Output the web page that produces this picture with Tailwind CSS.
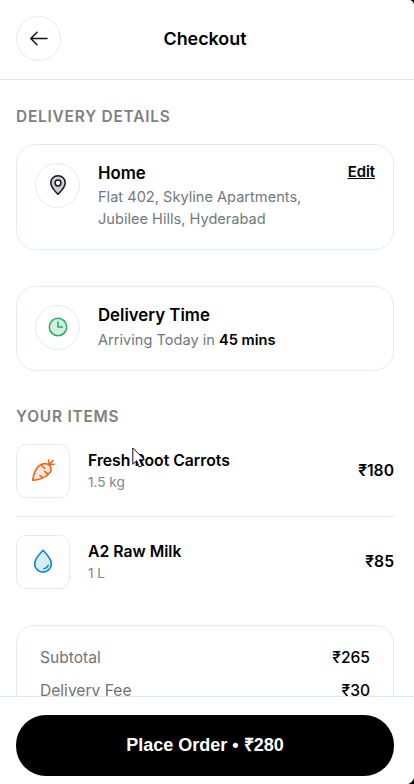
<!DOCTYPE html>
<html lang="en">
<head>
<meta charset="utf-8">
<meta name="viewport" content="width=device-width, initial-scale=1">
<title>Checkout</title>
<script src="https://cdn.jsdelivr.net/npm/@tailwindcss/browser@4"></script>
</head>
<body class="bg-black">
<div class="relative flex h-[784px] w-[414px] flex-col overflow-hidden rounded-tr-[5px] rounded-br-[8px] bg-white font-['Inter',sans-serif] text-black">
  <header class="grid h-20 shrink-0 grid-cols-[45px_1fr_45px] items-center border-b border-[#e2eeec] pr-5 pl-4 pb-[2px]">
    <button class="flex size-[45px] items-center justify-center rounded-full border border-[#e2eeec]" aria-label="Back">
      <svg class="size-6" viewBox="0 0 24 24" fill="none" stroke="#111" stroke-width="1.5" stroke-linecap="round" stroke-linejoin="round"><path d="M20 11.500H4M10 5.200 3.800 11.500 10 17.800"/></svg>
    </button>
    <h1 class="text-center text-[17.9px] leading-6 font-semibold">Checkout</h1>
  </header>

  <main class="min-h-0 flex-1 overflow-hidden pr-5 pl-4 pt-[26px]">
    <h2 class="h-[38px] text-[15.4px] leading-[22px] font-semibold tracking-[0.8px] text-[#7f7e84]">DELIVERY DETAILS</h2>
    <section class="flex h-[106px] rounded-[20px] border border-[#e2eeec] px-[18px] pt-[18px]">
      <div class="flex size-[45px] shrink-0 items-center justify-center rounded-full border border-[#e2eeec]">
        <svg class="mb-[2px] size-[22px]" viewBox="0 0 22 22"><path d="M11 1.700c-4.200 0-7.200 3-7.200 7C3.800 13.500 8 17 11 20.300c3-3.300 7.200-6.800 7.200-11.600 0-4-3-7-7.200-7Z" fill="#cfccd6" stroke="#17151c" stroke-width="1.500" stroke-linejoin="round"/><circle cx="11" cy="9" r="2.900" fill="#fff" stroke="#17151c" stroke-width="1.500"/></svg>
      </div>
      <div class="-mt-px ml-[18px] flex-1">
        <h3 class="text-[16.8px] leading-[22px] font-semibold">Home</h3>
        <p class="mt-[2px] text-[14.6px] leading-[22px] text-[#727880]">Flat 402, Skyline Apartments,<br>Jubilee Hills, Hyderabad</p>
      </div>
      <a class="h-5 text-[14.8px] leading-[18px] font-semibold underline">Edit</a>
    </section>
    <section class="mt-9 flex h-[85px] rounded-[20px] border border-[#e2eeec] px-[18px] pt-[18px]">
      <div class="flex size-[45px] shrink-0 items-center justify-center rounded-full border border-[#e2eeec]">
        <svg class="mb-[2px] size-[22px]" viewBox="0 0 22 22" fill="none" stroke="#27ae60" stroke-width="1.500"><circle cx="11" cy="11" r="8.700" fill="#d3eee1"/><path d="M11 5.500V11h5"/></svg>
      </div>
      <div class="-mt-px ml-[18px]">
        <h3 class="text-[16.8px] leading-[22px] font-semibold">Delivery Time</h3>
        <p class="mt-[3px] text-[14.600px] leading-[22px] text-[#727880]">Arriving Today in <strong class="font-semibold text-black">45 mins</strong></p>
      </div>
    </section>

    <h2 class="mt-[35px] h-[38px] text-[15.4px] leading-[22px] font-semibold tracking-[0.8px] text-[#7f7e84]">YOUR ITEMS</h2>
    <div class="flex h-[73px] items-start border-b border-[#e2eeec]">
      <div class="flex size-[54px] shrink-0 items-center justify-center rounded-[10px] border border-[#e2eeec]">
        <svg class="size-[26px]" viewBox="0 0 26 26" fill="none" stroke="#f26416" stroke-width="1.600" stroke-linecap="round" stroke-linejoin="round"><path d="M2.700 22.300C3.200 18.500 5 12 8.500 8.300c3-3.100 8-3.500 10.700-1.300 2.700 2.500 2.600 6.200-.4 9-4 3.700-10.500 6-16.100 6.300Z" fill="#f8e5dc"/><path d="M11.500 7.500l3.200 3M17.800 16.200l-3-2.800M10 17.500l2.300 2.200M19.200 6.800 18.500 2M19.200 6.800 23 2.500M19.200 6.800l5-.6"/></svg>
      </div>
      <div class="ml-[18px] flex-1 pt-[6px]">
        <h3 class="text-[15.75px] leading-[22px] font-semibold">Fresh Root Carrots</h3>
        <p class="text-[13.600px] leading-[21px] text-[#85848b]">1.5 kg</p>
      </div>
      <span class="pt-4 text-[15.7px] leading-[22px] font-semibold">₹180</span>
    </div>
    <div class="mt-[18px] flex h-[54px] items-start">
      <div class="flex size-[54px] shrink-0 items-center justify-center rounded-[10px] border border-[#e2eeec]">
        <svg class="mb-[2px] size-[26px]" viewBox="0 0 26 26" fill="none" stroke="#1288c9" stroke-width="1.700" stroke-linecap="round" stroke-linejoin="round"><path d="M13 2.300C9.500 6 4.600 10.800 4.600 15.800a8.400 8.300 0 0 0 16.800 0C21.400 10.800 16.500 6 13 2.300Z" fill="#d5eef5"/><path d="M18.200 17.500c-.8 1.800-2 2.700-4.200 3.300"/></svg>
      </div>
      <div class="ml-[18px] flex-1 pt-[6px]">
        <h3 class="text-[15.75px] leading-[22px] font-semibold">A2 Raw Milk</h3>
        <p class="text-[13.600px] leading-[21px] text-[#85848b]">1 L</p>
      </div>
      <span class="pt-4 text-[15.7px] leading-[22px] font-semibold">₹85</span>
    </div>

    <section class="mt-9 h-40 rounded-[18px] border border-[#e2eeec] px-[23px] pt-[21px] text-[15.6px] leading-[22px]">
      <div class="flex h-[33px] justify-between"><span class="text-[#727278]">Subtotal</span><span class="font-medium">₹265</span></div>
      <div class="flex h-[33px] justify-between"><span class="text-[#727278]">Delivery Fee</span><span class="font-medium">₹30</span></div>
    </section>
  </main>

  <footer class="h-[88px] shrink-0 border-t border-[#e2eeec] bg-white pr-5 pl-4 pt-[18px]">
    <button class="h-[61px] w-full rounded-[30px] bg-black font-['Liberation_Sans',sans-serif] text-[18px] font-bold text-white">Place Order • ₹280</button>
  </footer>

  <svg class="absolute top-[447px] left-[132px] h-[22px] w-[15px]" viewBox="0 0 15 22"><path d="M.8 1v16.300l3.800-3.600 2.700 6.300 2.800-1.200-2.700-6.100h5Z" fill="#fff" stroke="#111" stroke-width="1"/></svg>
</div>
</body>
</html>
